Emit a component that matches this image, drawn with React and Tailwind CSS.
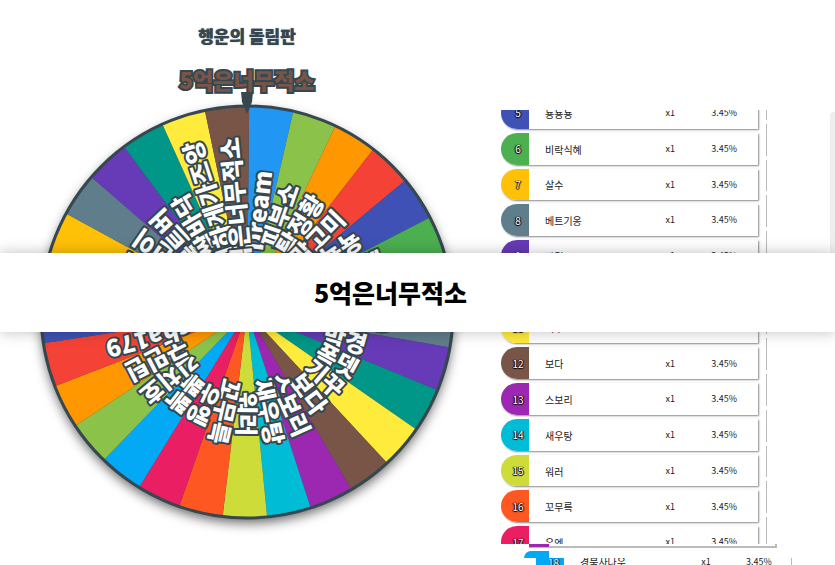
import clsx from 'clsx';

const SLICES = [
  { name: 'Dream', color: '#2196f3' },
  { name: '피부소', color: '#8bc34a' },
  { name: '탐정황', color: '#ff9800' },
  { name: '말고미', color: '#f44336' },
  { name: '뇽뇽뇽', color: '#3f51b5' },
  { name: '비락식혜', color: '#4caf50' },
  { name: '살수', color: '#ffc107' },
  { name: '베트기옹', color: '#607d8b' },
  { name: '박경', color: '#673ab7' },
  { name: '폭뎃', color: '#009688' },
  { name: '기꾸', color: '#ffeb3b' },
  { name: '보다', color: '#795548' },
  { name: '스보리', color: '#9c27b0' },
  { name: '새우탕', color: '#00bcd4' },
  { name: '워러', color: '#cddc39' },
  { name: '꼬무륵', color: '#ff5722' },
  { name: '우엥', color: '#e91e63' },
  { name: '뽁뽁', color: '#03a9f4' },
  { name: '김치호', color: '#8bc34a' },
  { name: '군민틴', color: '#ff9800' },
  { name: 'cha179', color: '#f44336' },
  { name: '하루', color: '#3f51b5' },
  { name: '구름', color: '#4caf50' },
  { name: '유즈키', color: '#ffc107' },
  { name: '오전이', color: '#607d8b' },
  { name: '뿔트버', color: '#673ab7' },
  { name: '쌈바닥', color: '#009688' },
  { name: '시원하게가즈앙', color: '#ffeb3b' },
  { name: '5억은너무적소', color: '#795548' },
];

const ROWS = [
  { no: 5, color: 'bg-[#3f51b5]' },
  { no: 6, color: 'bg-[#4caf50]' },
  { no: 7, color: 'bg-[#ffc107]' },
  { no: 8, color: 'bg-[#607d8b]' },
  { no: 9, color: 'bg-[#673ab7]' },
  { no: 10, color: 'bg-[#009688]' },
  { no: 11, color: 'bg-[#ffeb3b]' },
  { no: 12, color: 'bg-[#795548]' },
  { no: 13, color: 'bg-[#9c27b0]' },
  { no: 14, color: 'bg-[#00bcd4]' },
  { no: 15, color: 'bg-[#cddc39]' },
  { no: 16, color: 'bg-[#ff5722]' },
  { no: 17, color: 'bg-[#e91e63]' },
];

const WINNER = '5억은너무적소';
const RADIUS = 206;
const STEP = 360 / SLICES.length;
const START = 0.6;

const point = (deg) => {
  const rad = ((deg - 90) * Math.PI) / 180;
  return `${RADIUS * Math.cos(rad)} ${RADIUS * Math.sin(rad)}`;
};

function Wheel() {
  return (
    <svg viewBox="-220 -220 440 440" className="w-[440px] h-[440px] overflow-visible">
      <g className="drop-shadow-[0_5px_6px_rgba(0,0,0,0.6)]">
        <circle r={RADIUS} fill="#37474f" />
      </g>
      {SLICES.map((slice, i) => (
        <path
          key={i}
          d={`M0 0 L${point(START + i * STEP)} A${RADIUS} ${RADIUS} 0 0 1 ${point(START + (i + 1) * STEP)} Z`}
          fill={slice.color}
        />
      ))}
      <circle r={RADIUS} fill="none" stroke="#37474f" strokeWidth="3" />
      <g
        fill="#fff"
        stroke="#37474f"
        strokeWidth="4"
        strokeLinejoin="round"
        paintOrder="stroke"
        textAnchor="middle"
        dominantBaseline="central"
        className="text-[24px] font-black"
      >
        {SLICES.map((slice, i) => (
          <text key={i} x="102" y="-2" transform={`rotate(${START + (i + 0.5) * STEP - 90})`}>
            {slice.name}
          </text>
        ))}
      </g>
      <path d="M-6 -220 H6 L5 -210 L0 -198 L-5 -210 Z" fill="#37474f" />
    </svg>
  );
}

function Badge({ no, color }) {
  return (
    <span
      className={clsx(
        'flex w-7 h-full items-center justify-center rounded-l-full pl-1.5 text-[10px] text-white [text-shadow:0_0_1px_#000,1px_0_1px_#000,-1px_0_1px_#000,0_1px_1px_#000]',
        color
      )}
    >
      {no}
    </span>
  );
}

function Participants() {
  return (
    <div className="flex h-[434px] overflow-hidden">
      <table className="block w-[77%] -mt-[13px]">
        <tbody className="grid h-[465px] auto-rows-fr text-[10px] text-[#222]">
          {ROWS.map((row) => (
            <tr key={row.no} className="flex items-center mb-1 rounded-l-full bg-white shadow-[1px_1px_2px_#888]">
              <td className="h-full p-0">
                <Badge no={row.no} color={row.color} />
              </td>
              <td className="flex-1 pt-px pl-4">{SLICES[row.no - 1].name}</td>
              <td className="w-10 text-center text-[9px]">x1</td>
              <td className="w-[68px] text-center text-[9px]">3.45%</td>
            </tr>
          ))}
        </tbody>
      </table>
      <div className="grid w-[9px] h-[465px] -mt-[22px] auto-rows-fr">
        {ROWS.map((row) => (
          <span key={row.no} className="mb-1 border-r border-[#bbb]" />
        ))}
      </div>
    </div>
  );
}

// Row that peeks out below the scroll area.
function NextRow() {
  return (
    <div className="relative h-[21px] overflow-hidden text-[10px] text-[#222]">
      <div className="ml-7 w-[248px] h-1 border-b-2 border-r-2 border-[#bbb]">
        <div className="w-5 h-[3px] bg-[#9c27b0]" />
      </div>
      <div className="ml-[23px] mt-[3px] w-[25px] h-[7px] rounded-tl-full bg-[#03a9f4]" />
      <div className="ml-[35px] flex h-[7px] items-center overflow-hidden">
        <span className="w-7 h-full shrink-0 bg-[#03a9f4] pl-3 leading-[9px] text-white [text-shadow:0_0_1px_#000,1px_0_1px_#000]">
          18
        </span>
        <span className="w-[105px] pl-4 leading-[9px]">경북사나우</span>
        <span className="w-[74px] text-center text-[9px] leading-[9px]">x1</span>
        <span className="w-8 text-center text-[9px] leading-[9px]">3.45%</span>
        <span className="ml-4 w-px h-full bg-[#bbb]" />
      </div>
    </div>
  );
}

export default function App() {
  return (
    <main className="relative min-h-screen overflow-hidden bg-white font-['Noto_Sans_CJK_KR',sans-serif]">
      <div className="grid grid-cols-[494fr_341fr]">
        <section className="flex flex-col items-center pt-6">
          <h1 className="h-6 text-[17px] leading-6 font-black text-[#37474f] [text-shadow:0_0_1px_#37474f]">
            행운의 돌림판
          </h1>
          <p className="mt-[19px] h-[25px] text-[22px] leading-[25px] font-black text-[#795548] [-webkit-text-stroke:4px_#37474f] [paint-order:stroke]">
            {WINNER}
          </p>
          <Wheel />
        </section>
        <section className="pl-[7px] pt-[110px]">
          <Participants />
          <NextRow />
        </section>
      </div>

      <div className="absolute right-0 top-[112px] w-[5px] h-[144px] rounded-tl bg-[#eee]" />

      <div
        role="status"
        className="absolute inset-x-0 top-[253px] flex h-[79px] items-center justify-center bg-white pr-[54px] text-[25px] font-black text-black shadow-[0_0_14px_rgba(0,0,0,0.25)]"
      >
        {WINNER}
      </div>
    </main>
  );
}
